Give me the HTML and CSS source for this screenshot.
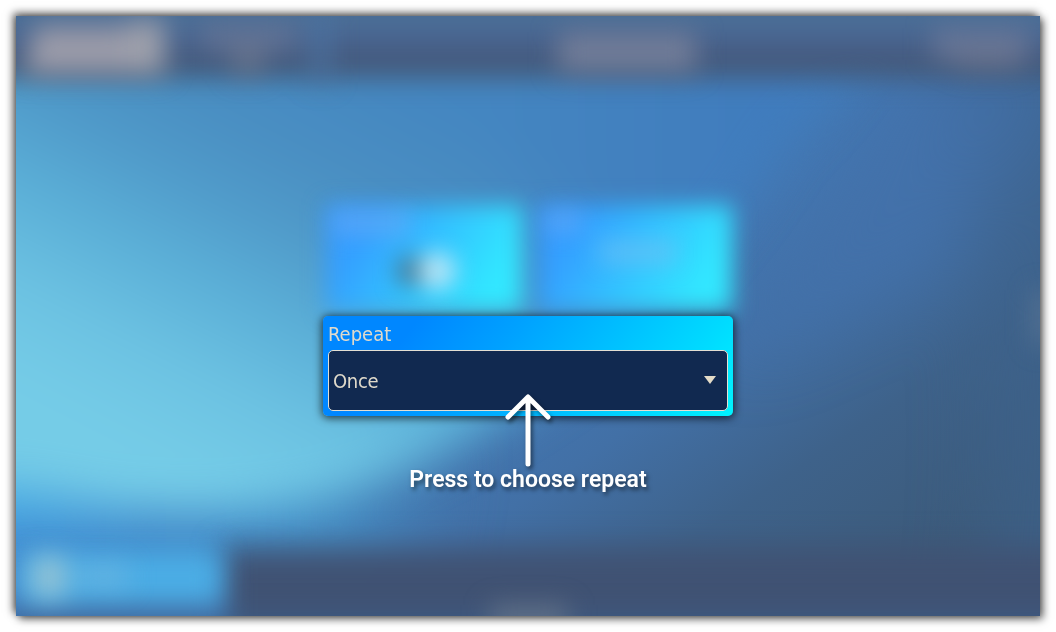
FILE: index.html
```html
<!DOCTYPE html>
<html lang="en">
<head>
<meta charset="utf-8">
<title>Repeat</title>
<link rel="stylesheet" href="styles.css">
</head>
<body>
<main class="screen">
  <svg class="backdrop" viewBox="16 16 1024 600" aria-hidden="true">
    <defs>
      <linearGradient id="base" gradientUnits="userSpaceOnUse" x1="500" y1="90" x2="860" y2="620">
        <stop offset="0" stop-color="#4383c2"/><stop offset=".38" stop-color="#4377b2"/><stop offset=".55" stop-color="#4270a6"/><stop offset=".75" stop-color="#3e628a"/><stop offset="1" stop-color="#3c5a79"/>
      </linearGradient>
      <linearGradient id="sweep" gradientUnits="userSpaceOnUse" x1="500" y1="130" x2="300" y2="526">
        <stop offset="0" stop-color="#4486c1"/><stop offset=".26" stop-color="#4a8fc2"/><stop offset=".42" stop-color="#509bca"/><stop offset=".6" stop-color="#5bafd7"/><stop offset=".8" stop-color="#6cc2e2"/><stop offset="1" stop-color="#75cce7"/>
      </linearGradient>
      <linearGradient id="crest" gradientUnits="userSpaceOnUse" x1="480" y1="0" x2="760" y2="0">
        <stop offset="0" stop-color="#407cbd" stop-opacity="0"/><stop offset="1" stop-color="#407cbd"/>
      </linearGradient>
      <linearGradient id="low" gradientUnits="userSpaceOnUse" x1="16" y1="0" x2="560" y2="0">
        <stop offset="0" stop-color="#438bd0"/><stop offset=".55" stop-color="#4690c7"/><stop offset="1" stop-color="#426c9f" stop-opacity="0"/>
      </linearGradient>
      <linearGradient id="bar" gradientUnits="userSpaceOnUse" x1="0" y1="16" x2="0" y2="82">
        <stop offset="0" stop-color="#4b7098"/><stop offset=".4" stop-color="#48638f"/><stop offset=".7" stop-color="#445678"/><stop offset="1" stop-color="#445c74"/>
      </linearGradient>
      <linearGradient id="tile" x1="0" y1="0" x2="1" y2=".35">
        <stop offset="0" stop-color="#3799ff"/><stop offset=".25" stop-color="#349fff"/><stop offset=".6" stop-color="#33c2ff"/><stop offset="1" stop-color="#32e8ff"/>
      </linearGradient>
      <filter id="b10" x="-80%" y="-80%" width="260%" height="260%" color-interpolation-filters="sRGB"><feGaussianBlur stdDeviation="11"/></filter>
      <filter id="b12" x="-80%" y="-80%" width="260%" height="260%" color-interpolation-filters="sRGB"><feGaussianBlur stdDeviation="13"/></filter>
      <filter id="b14" x="-30%" y="-80%" width="160%" height="260%" color-interpolation-filters="sRGB"><feGaussianBlur stdDeviation="15"/></filter>
      <filter id="b20" x="-30%" y="-30%" width="160%" height="160%" color-interpolation-filters="sRGB"><feGaussianBlur stdDeviation="22"/></filter>
      <filter id="b35" x="-60%" y="-60%" width="220%" height="220%" color-interpolation-filters="sRGB"><feGaussianBlur stdDeviation="35"/></filter>
    </defs>
    <rect x="16" y="16" width="1024" height="600" fill="url(#base)"/>
    <g filter="url(#b35)">
      <path d="M930 20H1150V650H970Q1020 350 930 20Z" fill="#3e628c" opacity=".65"/>
      <path d="M730 360L890 60H1060L940 270Z" fill="#4371aa" opacity=".7"/>
      <path d="M-80 430H440L410 610H-80Z" fill="url(#low)"/>
    </g>
    <g filter="url(#b20)">
      <path d="M-60 -20H910Q840 95 788 140Q700 275 600 355Q450 468 315 500Q190 522 80 500L-60 475Z" fill="url(#sweep)"/>
      <path d="M480 -20H910Q840 95 788 140Q700 275 600 355L480 415Z" fill="url(#crest)"/>
      <path d="M-60 470Q50 510 150 518Q75 530 -60 518Z" fill="#4ab0e8"/>
    </g>
    <path d="M-40 -30H1100V78H-40Z" fill="url(#bar)" filter="url(#b12)"/>
    <path d="M222 547H1110V650H222Z" fill="#405273" filter="url(#b14)"/>
    <g filter="url(#b12)">
      <rect x="222" y="612" width="850" height="38" fill="#3c6190" opacity=".5"/>
      <rect x="20" y="552" width="200" height="52" fill="#4bade5"/>
      <rect x="-10" y="608" width="230" height="34" fill="#41699e"/>
    </g>
    <g filter="url(#b12)">
      <rect x="32" y="557" width="34" height="40" fill="#94c2d4"/>
      <rect x="80" y="565" width="47" height="22" fill="#77b7dd" opacity=".6"/>
      <rect x="490" y="605" width="78" height="30" fill="#74808f" opacity=".6"/>
      <path d="M34 26H128V74H24Z" fill="#9a9ba9"/>
      <rect x="128" y="20" width="37" height="54" fill="#9da0ab"/>
      <rect x="200" y="24" width="96" height="26" fill="#727b98" opacity=".6"/>
      <rect x="232" y="47" width="32" height="28" fill="#7a8091" opacity=".6"/>
      <rect x="312" y="10" width="18" height="72" fill="#4c74a2" opacity=".8"/>
      <rect x="558" y="32" width="138" height="40" fill="#75809a" opacity=".9"/>
      <rect x="932" y="28" width="98" height="32" fill="#74809d" opacity=".65"/>
      <rect x="955" y="48" width="65" height="22" fill="#76798d" opacity=".5"/>
      <rect x="1034" y="290" width="20" height="55" fill="#687f99" opacity=".6"/>
    </g>
    <g filter="url(#b10)">
      <rect x="326" y="205" width="196" height="106" fill="url(#tile)"/>
      <rect x="538" y="205" width="194" height="106" fill="url(#tile)"/>
    </g>
    <g filter="url(#b10)">
      <path d="M333 211H410V235H333ZM546 211H581V232H546Z" fill="#74abf2" opacity=".5"/>
      <rect x="600" y="240" width="76" height="24" fill="#72c0f3" opacity=".6"/>
      <rect x="398" y="257" width="28" height="28" fill="#486f88" opacity=".9"/>
      <circle cx="437" cy="271" r="19" fill="#b4e4f6"/>
    </g>
  </svg>

  <section class="repeat-card">
    <div class="card-label">Repeat</div>
    <div class="select" role="button" tabindex="0">
      <span>Once</span>
      <svg class="caret" viewBox="0 0 12 8"><path d="M0 0H12L6 8Z"/></svg>
    </div>
  </section>

  <div class="hint">
    <svg class="arrow" viewBox="0 0 48 74"><path d="M24 5V71M4 24L24 4L44 24"/></svg>
    <div class="hint-text">Press to choose repeat</div>
  </div>
</main>
</body>
</html>
```
FILE: styles.css
```css
* { box-sizing: border-box; }

body {
  margin: 0;
  padding: 16px;
  height: 632px;
  overflow: hidden;
  background: #fff;
}

.screen {
  position: relative;
  display: flex;
  flex-direction: column;
  align-items: center;
  width: 1024px;
  height: 600px;
  padding-top: 300px;
  box-shadow: -3px -3px 8px rgba(0, 0, 0, .6), 3px 3px 8px rgba(0, 0, 0, .6);
}

.backdrop {
  position: absolute;
  inset: 0;
  width: 1024px;
  height: 600px;
  overflow: hidden;
}

.repeat-card {
  position: relative;
  width: 410px;
  height: 100px;
  padding: 2px 5px 5px;
  border-radius: 5px;
  background: linear-gradient(128deg, #0087ff 0%, #0087ff 20%, #00a2ff 42%, #00dcff 84%, #00f4ff 100%);
  box-shadow: 0 1px 8px 1px rgba(0, 0, 0, .7);
  font: 20px/32px "DejaVu Sans Condensed", "DejaVu Sans", sans-serif;
  font-stretch: condensed;
  color: #e0dacb;
}

.card-label { height: 32px; }

.select {
  display: flex;
  align-items: center;
  justify-content: space-between;
  height: 61px;
  padding: 0 11px 0 4px;
  border: 1px solid #e4dfd3;
  border-radius: 5px;
  background: #112950;
}

.select span { letter-spacing: -.3px; }

.caret { width: 12px; height: 8px; margin-top: -2px; fill: #e4dcc8; }

.hint {
  position: relative;
  display: flex;
  flex-direction: column;
  align-items: center;
  margin-top: -23px;
  filter: drop-shadow(2px 3px 2px rgba(0, 0, 0, .5));
}

.arrow {
  width: 48px;
  height: 74px;
  fill: none;
  stroke: #fff;
  stroke-width: 5;
  stroke-linecap: round;
  stroke-linejoin: round;
}

.hint-text {
  margin-top: -1px;
  font: 600 23px/28px Roboto, sans-serif;
  color: #fff;
  white-space: nowrap;
}
```
